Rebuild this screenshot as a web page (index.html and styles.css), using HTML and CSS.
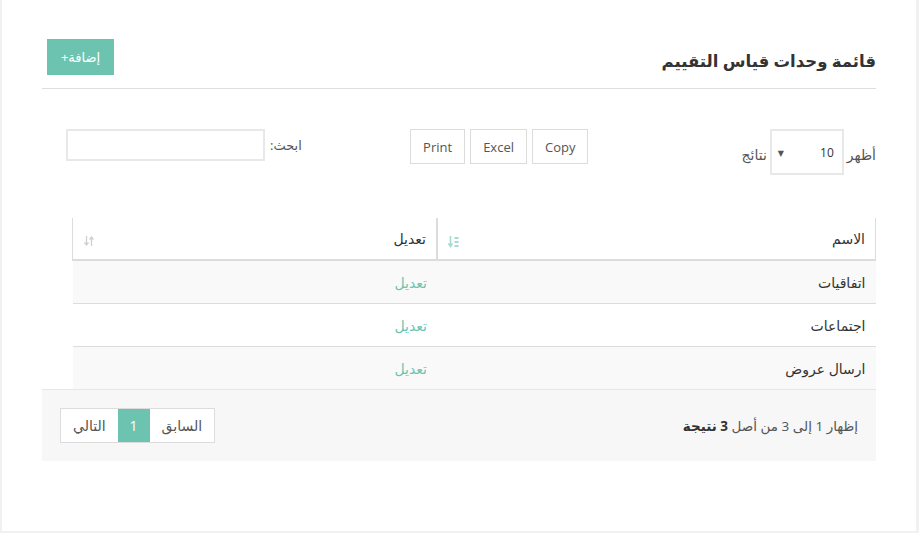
FILE: index.html
```html
<!DOCTYPE html>
<html lang="ar" dir="rtl">
<head>
<meta charset="utf-8">
<title>قائمة وحدات قياس التقييم</title>
<link rel="stylesheet" href="styles.css">
</head>
<body>
<div class="panel">
  <div class="panel-head">
    <h1 class="title">قائمة وحدات قياس التقييم</h1>
    <a class="btn-add" href="#">إضافة+</a>
  </div>

  <div class="toolbar">
    <div class="length">
      <span class="lbl">أظهر</span>
      <div class="select"><span class="val">10</span><span class="caret">▼</span></div>
      <span class="lbl">نتائج</span>
    </div>
    <div class="buttons">
      <button class="tbtn">Copy</button>
      <button class="tbtn">Excel</button>
      <button class="tbtn">Print</button>
    </div>
    <div class="search">
      <span class="lbl">ابحث:</span>
      <input class="search-input" type="text">
    </div>
  </div>

  <table class="grid">
    <thead>
      <tr>
        <th class="col-name"><div class="th-in"><span>الاسم</span>
          <svg class="sort sort-on" width="12" height="14" viewBox="0 0 12 14"><path d="M2.5 1v10M0.5 8.5l2 3 2-3" stroke="currentColor" stroke-width="1.6" fill="none"/><rect x="6.5" y="2" width="4" height="2" fill="currentColor"/><rect x="6.5" y="6" width="4" height="2" fill="currentColor"/><rect x="6.5" y="10" width="4" height="2" fill="currentColor"/></svg>
        </div></th>
        <th class="col-edit"><div class="th-in"><span>تعديل</span>
          <svg class="sort sort-off" width="12" height="12" viewBox="0 0 12 12"><path d="M3.5 1v9M1.5 7.5l2 2.5 2-2.5M8.5 11V2M6.5 4.5l2-2.5 2 2.5" stroke="currentColor" stroke-width="1.3" fill="none"/></svg>
        </div></th>
      </tr>
    </thead>
    <tbody>
      <tr class="odd"><td>اتفاقيات</td><td><a class="link" href="#">تعديل</a></td></tr>
      <tr><td>اجتماعات</td><td><a class="link" href="#">تعديل</a></td></tr>
      <tr class="odd"><td>ارسال عروض</td><td><a class="link" href="#">تعديل</a></td></tr>
    </tbody>
  </table>

  <div class="foot">
    <div class="info">إظهار 1 إلى 3 من أصل <b>3 نتيجة</b></div>
    <div class="pager">
      <span class="pg">السابق</span>
      <span class="pg active">1</span>
      <span class="pg">التالي</span>
    </div>
  </div>
</div>
</body>
</html>
```
FILE: styles.css
```css
html, body {
  margin: 0;
  padding: 0;
}
body {
  background: #f1f1f1;
  font-family: "Open Sans", "DejaVu Sans", sans-serif;
  font-size: 14px;
  color: #333;
  direction: rtl;
}
.panel {
  margin: 0 3px 0 2px;
  width: 834px;
  height: 531px;
  background: #fff;
  padding: 0 40px;
  box-sizing: content-box;
}
.panel-head {
  display: flex;
  justify-content: space-between;
  align-items: flex-end;
  padding-top: 39px;
  padding-bottom: 13px;
  border-bottom: 1px solid #dedede;
}
.title {
  margin: 0;
  font-size: 16.5px;
  font-weight: bold;
  line-height: 24px;
  color: #333;
  position: relative;
  top: -2px;
}
.btn-add {
  display: block;
  width: 67px;
  height: 36px;
  line-height: 36px;
  text-align: center;
  background: #6cc4b0;
  color: #fff;
  text-decoration: none;
  font-size: 13px;
  margin-left: 5px;
}
.toolbar {
  display: flex;
  align-items: flex-start;
  margin-top: 40px;
  padding-left: 24px;
}
.length {
  display: flex;
  align-items: center;
  gap: 3px;
  height: 46px;
  padding-top: 4px;
  box-sizing: border-box;
}
.lbl {
  color: #555;
  font-size: 14px;
}
.select {
  width: 74px;
  height: 46px;
  box-sizing: border-box;
  border: 2px solid #e8e8e8;
  display: flex;
  align-items: center;
  justify-content: space-between;
  padding: 0 8px 0 6px;
  margin-top: -4px;
  direction: ltr;
  flex-direction: row-reverse;
}
.val {
  font-size: 12px;
  color: #333;
}
.caret {
  font-size: 8px;
  color: #555;
}
.buttons {
  display: flex;
  gap: 5px;
  margin-right: 153px;
}
.tbtn {
  height: 35px;
  box-sizing: border-box;
  border: 1px solid #dcdcdc;
  background: #fff;
  font-family: "Open Sans", sans-serif;
  font-size: 13px;
  color: #555;
  padding: 0 12px;
  margin: 0;
}
.search {
  display: flex;
  align-items: center;
  gap: 5px;
  margin-right: auto;
}
.search .lbl {
  font-size: 13px;
}
.search-input {
  width: 199px;
  height: 32px;
  box-sizing: border-box;
  border: 2px solid #e8e8e8;
  margin: 0;
  padding: 0 6px;
  outline: none;
}
.grid {
  width: 804px;
  margin-top: 43px;
  margin-left: 30px;
  border-collapse: collapse;
}
.grid th {
  height: 41px;
  text-align: right;
  font-weight: normal;
  color: #333;
  border-left: 1px solid #dcdcdc;
  border-right: 1px solid #dcdcdc;
  border-bottom: 2px solid #dcdcdc;
  padding: 0 10px;
}
.grid th.col-name {
  width: 417px;
  border-left: 2px solid #dcdcdc;
}
.th-in {
  display: flex;
  justify-content: space-between;
  align-items: center;
}
.sort {
  display: block;
}
.sort-on {
  color: #a6dccf;
  margin-top: 6px;
}
.sort-off {
  color: #cfcfcf;
  margin-top: 4px;
}
.grid td {
  height: 42px;
  padding: 0 10px;
  border-top: 1px solid #dcdcdc;
  color: #333;
}
.grid tbody tr:last-child td {
  border-bottom: 1px solid #e4e4e4;
}
.grid tr.odd td {
  background: #f9f9f9;
}
.link {
  color: #6cc4b0;
  text-decoration: none;
}
.foot {
  display: flex;
  justify-content: space-between;
  align-items: center;
  background: #f7f7f7;
  height: 72px;
  padding: 0 18px;
  box-sizing: border-box;
  margin-top: -1px;
  border-top: 1px solid #e6e6e6;
}
.info {
  color: #555;
  font-size: 13.5px;
}
.info b {
  color: #333;
}
.pager {
  display: flex;
  border: 1px solid #dcdcdc;
  background: #fff;
  margin-top: -1px;
}
.pg {
  height: 33px;
  line-height: 33px;
  padding: 0 12px;
  color: #555;
  font-size: 14px;
}
.pg.active {
  background: #6cc4b0;
  color: #fff;
  width: 32px;
  padding: 0;
  text-align: center;
}
```
